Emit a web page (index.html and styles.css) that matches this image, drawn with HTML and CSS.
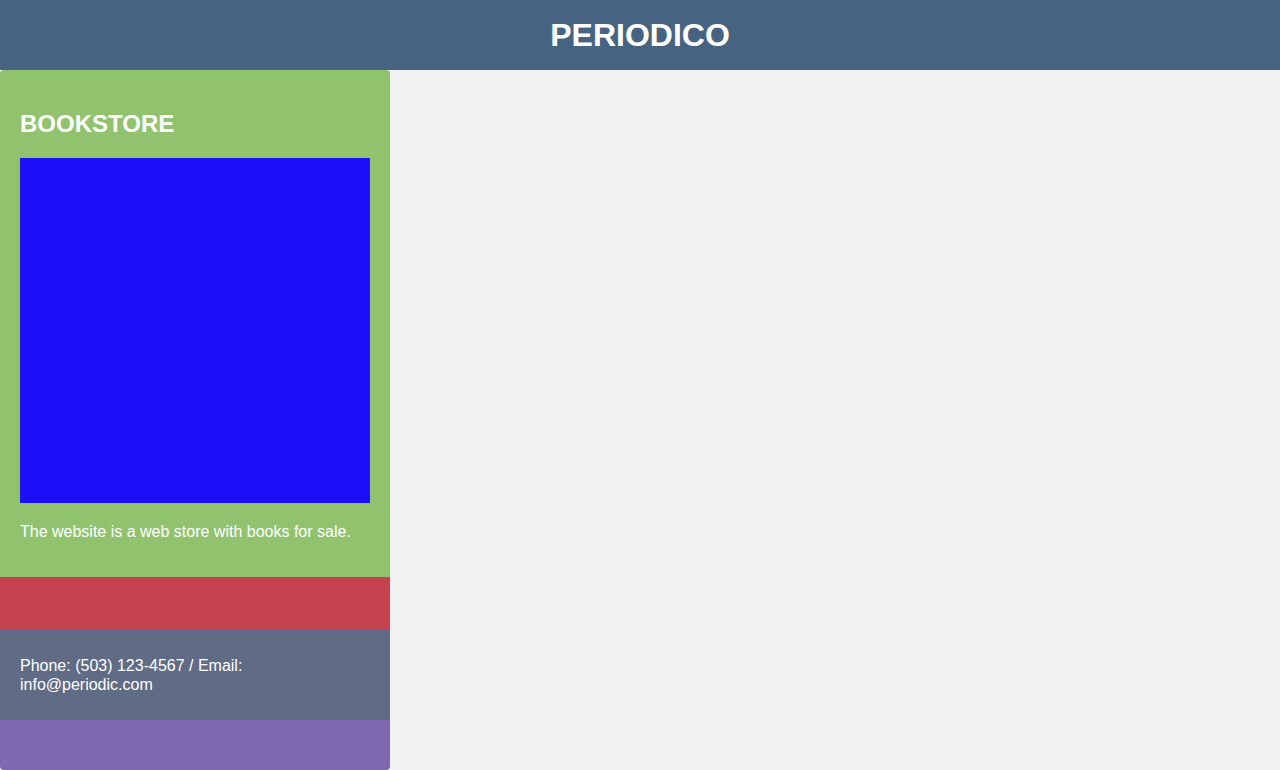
FILE: index.html
```html
<!DOCTYPE html>
<html lang="en">
<head>
<meta charset="utf-8">
<title>Periodico</title>
<link rel="stylesheet" href="styles.css">
</head>
<body>
<header class="site-header">
  <h1 class="site-title">PERIODICO</h1>
</header>
<div class="layout">
  <aside class="sidebar">
    <section class="store">
      <h2 class="store-title">BOOKSTORE</h2>
      <div class="store-image"></div>
      <p class="store-text">The website is a web store with books for sale.</p>
    </section>
    <section class="band-red"></section>
    <section class="contact">
      <p class="contact-text">Phone: (503) 123-4567 / Email: info@periodic.com</p>
    </section>
    <section class="band-purple"></section>
  </aside>
</div>
</body>
</html>
```
FILE: styles.css
```css
html, body {
  margin: 0;
  padding: 0;
}
body {
  background: #f2f2f2;
  font-family: "Liberation Sans", Arial, sans-serif;
  color: #ffffff;
  height: 770px;
  overflow: hidden;
}
.site-header {
  background: #466482;
  height: 70px;
  display: flex;
  align-items: center;
  justify-content: center;
}
.site-title {
  margin: 0;
  font-size: 32px;
  font-weight: bold;
  line-height: 37px;
}
.layout {
  display: flex;
}
.sidebar {
  width: 390px;
  height: 700px;
  border-radius: 4px;
  overflow: hidden;
  display: flex;
  flex-direction: column;
}
.store {
  background: #91c36f;
  padding: 20px;
  height: 467px;
}
.store-title {
  margin: 20px 0 20px;
  font-size: 24px;
  line-height: 28px;
  font-weight: bold;
}
.store-image {
  width: 350px;
  height: 345px;
  background: #1c10fb;
  margin-bottom: 20px;
}
.store-text {
  margin: 0;
  font-size: 16px;
  line-height: 18px;
}
.band-red {
  background: #c4434f;
  height: 53px;
}
.contact {
  background: #606c85;
  height: 90px;
  box-sizing: border-box;
  padding: 26px 20px 0;
}
.contact-text {
  margin: 0;
  font-size: 16px;
  line-height: 19px;
}
.band-purple {
  background: #7e68b2;
  flex: 1;
}
```
